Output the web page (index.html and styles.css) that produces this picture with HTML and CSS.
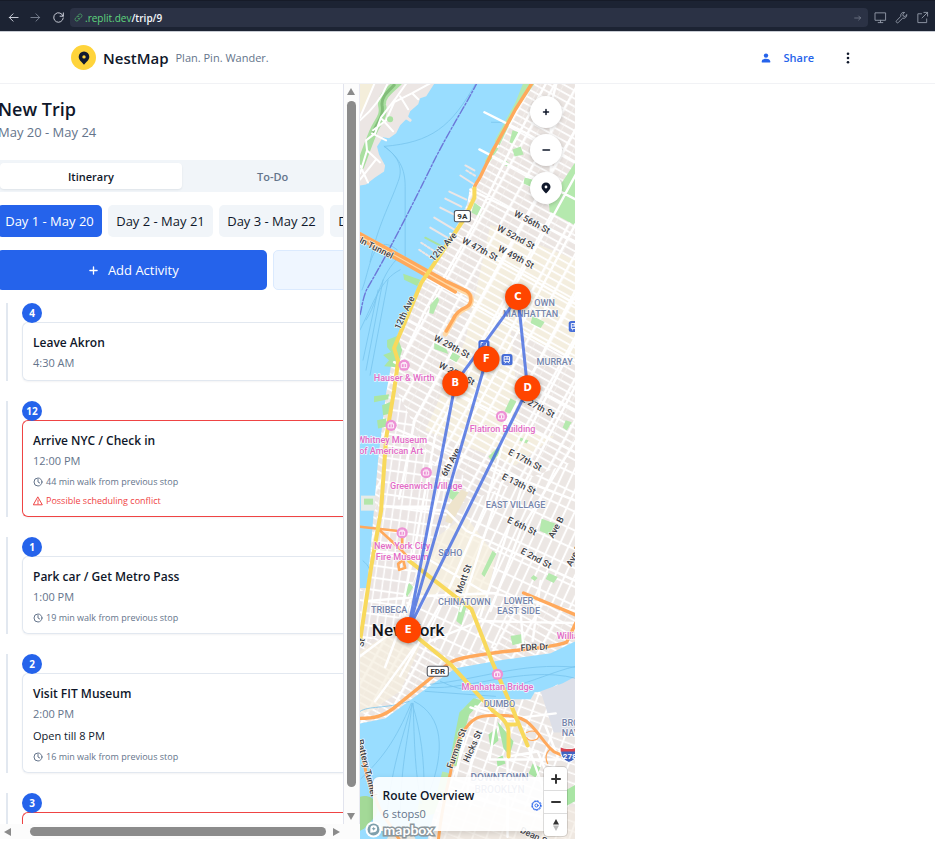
FILE: index.html
```html
<!DOCTYPE html>
<html lang="en">
<head>
<meta charset="utf-8">
<title>NestMap</title>
<link rel="stylesheet" href="styles.css">
</head>
<body>
<div class="browser">
  <button class="nav" aria-label="Back"><svg viewBox="0 0 12 12"><path d="M11 6H1.5M5.500 2L1.500 6l4 4"/></svg></button>
  <button class="nav dim" aria-label="Forward"><svg viewBox="0 0 12 12"><path d="M1 6h9.500M6.500 2l4 4-4 4"/></svg></button>
  <button class="nav" aria-label="Reload"><svg viewBox="0 0 12 12"><path d="M11 4.500A5.200 5.200 0 1 0 11.200 6.500M11.300 1v3.600H7.700"/></svg></button>
  <a class="address" href="#">
    <svg class="chain" viewBox="0 0 12 12"><path d="M5 3.500L6.500 2a2.300 2.300 0 0 1 3.400 3.400L8.300 7a2.300 2.300 0 0 1-3 .2M7 8.500L5.500 10A2.300 2.300 0 0 1 2.100 6.600L3.700 5a2.300 2.300 0 0 1 3-.2"/></svg>
    <span class="host">.replit.dev</span><span class="path">/trip/9</span>
    <svg class="go" viewBox="0 0 12 12"><path d="M1 6h9M7 3l3 3-3 3"/></svg>
  </a>
  <div class="tools">
    <button class="tool" aria-label="Device"><svg viewBox="0 0 14 14"><path d="M1.500 2h11v8h-11zM7 10v2.500M4.500 12.500h5"/></svg></button>
    <button class="tool" aria-label="Tools"><svg viewBox="0 0 14 14"><path d="M12.700 4.200l-2 1.800-1.800-.6-.5-1.800 2-2A3.300 3.300 0 0 0 6.300 5.700L1.700 10.400a1.300 1.300 0 0 0 1.900 1.900L8.300 7.700a3.300 3.300 0 0 0 4.400-3.500z"/></svg></button>
    <button class="tool" aria-label="Open in new tab"><svg viewBox="0 0 14 14"><path d="M6 3H2v9.500h9.500V8.500M8.500 1.500h4v4M12.500 1.500L6.500 7.500"/></svg></button>
  </div>
</div>

<header class="header">
  <div class="brand">
    <span class="logo"><svg viewBox="0 0 12 14"><path fill-rule="evenodd" d="M6 .5a5.300 5.300 0 0 0-5.300 5.300C.7 9 3.800 11 6 13.700 8.200 11 11.300 9 11.300 5.800A5.300 5.300 0 0 0 6 .5zM6 4.200a1.700 1.700 0 1 1 0 3.400 1.700 1.700 0 0 1 0-3.400z"/></svg></span>
    <h1>NestMap</h1>
    <p>Plan. Pin. Wander.</p>
  </div>
  <div class="actions">
    <button class="share"><svg viewBox="0 0 10 10"><circle cx="5" cy="2.600" r="2.200"/><path d="M.8 9.500V8.300C.8 6.600 3 5.800 5 5.800s4.200.8 4.200 2.500v1.200z"/></svg>Share</button>
    <button class="more" aria-label="More"><svg viewBox="0 0 4 12"><circle cx="2" cy="1.700" r="1.300"/><circle cx="2" cy="6" r="1.300"/><circle cx="2" cy="10.300" r="1.300"/></svg></button>
  </div>
</header>

<main class="main">
  <section class="sidebar">
    <div class="pane">
      <div class="content">
        <div class="trip">
          <h2>New Trip</h2>
          <p>May 20 - May 24</p>
        </div>
        <div class="tabs">
          <button class="tab on">Itinerary</button>
          <button class="tab">To-Do</button>
        </div>
        <div class="days">
          <button class="day on">Day 1 - May 20</button>
          <button class="day">Day 2 - May 21</button>
          <button class="day">Day 3 - May 22</button>
          <button class="day">Day 4 - May 23</button>
        </div>
        <div class="add-row">
          <button class="add"><svg viewBox="0 0 10 10"><path d="M5 1v8M1 5h8"/></svg>Add Activity</button>
          <button class="ghost" aria-label="Optimize"></button>
        </div>
        <ol class="list">
          <li><span class="badge">4</span>
            <article class="card"><h3>Leave Akron</h3><p class="time">4:30 AM</p></article></li>
          <li><span class="badge">12</span>
            <article class="card conflict"><h3>Arrive NYC / Check in</h3><p class="time">12:00 PM</p>
              <p class="meta"><svg viewBox="0 0 10 10"><circle cx="5" cy="5" r="4"/><path d="M5 2.500V5l1.700 1"/></svg>44 min walk from previous stop</p>
              <p class="meta warn"><svg viewBox="0 0 10 10"><path d="M5 1.200L9.300 8.800H.7zM5 4v2M5 7v.8"/></svg>Possible scheduling conflict</p></article></li>
          <li><span class="badge">1</span>
            <article class="card"><h3>Park car / Get Metro Pass</h3><p class="time">1:00 PM</p>
              <p class="meta"><svg viewBox="0 0 10 10"><circle cx="5" cy="5" r="4"/><path d="M5 2.500V5l1.700 1"/></svg>19 min walk from previous stop</p></article></li>
          <li><span class="badge">2</span>
            <article class="card"><h3>Visit FIT Museum</h3><p class="time">2:00 PM</p><p class="note">Open till 8 PM</p>
              <p class="meta"><svg viewBox="0 0 10 10"><circle cx="5" cy="5" r="4"/><path d="M5 2.500V5l1.700 1"/></svg>16 min walk from previous stop</p></article></li>
          <li><span class="badge">3</span>
            <article class="card conflict tall"></article></li>
        </ol>
      </div>
    </div>
    <div class="vbar"><i class="arrow up"></i><i class="thumb"></i><i class="arrow down"></i></div>
    <div class="hbar"><i class="arrow left"></i><i class="thumb"></i><i class="arrow right"></i></div>
  </section>

  <section class="map">
    <svg class="tiles" viewBox="360 83 215 756" preserveAspectRatio="xMidYMid slice" role="img" aria-label="Map of Manhattan">
      <defs>
        <pattern id="grid" width="20" height="7" patternUnits="userSpaceOnUse" patternTransform="translate(474 188) rotate(29)">
          <rect width="20" height="7" fill="#fff"/><rect x="1.500" y="1" width="17.500" height="5.200" fill="#ebe5e2"/><path d="M8 1v5" stroke="#f3efec" stroke-width="1"/>
        </pattern>
        <pattern id="cream" width="20" height="7" patternUnits="userSpaceOnUse" patternTransform="translate(474 188) rotate(29)">
          <rect width="20" height="7" fill="#fff"/><rect x="1.500" y="1" width="17.500" height="5.200" fill="#f4eedf"/>
        </pattern>
        <pattern id="lower" width="9" height="17" patternUnits="userSpaceOnUse" patternTransform="translate(470 500) rotate(25)">
          <rect width="9" height="17" fill="#fff"/><rect x="1" y="1" width="7" height="15" fill="#ece7e4"/>
        </pattern>
        <pattern id="west" width="8" height="12" patternUnits="userSpaceOnUse" patternTransform="translate(390 470) rotate(8)">
          <rect width="8" height="12" fill="#fff"/><rect x="1" y="1" width="6.500" height="10" fill="#ebe5e4"/>
        </pattern>
        <pattern id="bk" width="13" height="9" patternUnits="userSpaceOnUse" patternTransform="translate(480 700) rotate(20)">
          <rect width="13" height="9" fill="#fff"/><rect x="1" y="1" width="11" height="7.500" fill="#ebe6e3"/>
        </pattern>
      </defs>
      <rect x="360" y="83" width="215" height="756" fill="#99ddff"/>

      <!-- New Jersey shore -->
      <path d="M360 83h75l-9 14-6 2-2 6-8 7-2 5 2 4-4-1-6 6-4 8-7 5-6-1-6 9 2 8 6 11-1 6-9 6-9 7-6 1z" fill="#ece6e4"/>
      <path d="M360 83h14l-8 24-6 6z" fill="#f4eedb"/>
      <path d="M398 83c-8 8-17 13-16 23 3 12-5 16-9 27-5 12-9 24-13 34" fill="none" stroke="#a9dfa0" stroke-width="8"/>
      <path d="M394 86c-7 7-13 12-12 20 2 11-5 17-9 27" fill="none" stroke="#82bd79" stroke-width="3"/>
      <g fill="none" stroke="#fff" stroke-width="2">
        <path d="M375 83l-15 35M388 83c-6 16-15 27-28 38M407 83l-12 17-14 18-6 16-9 7 1 10-7 23M432 83l-20 11-18 9-8 18-13 10M400 97l8 13M412 94l6 6M382 120l11 12M372 134l14 7M367 151l13 12M360 180l16-20M360 166l8 17"/>
      </g>
      <circle cx="390" cy="120" r="3" fill="#a9e2a0"/><path d="M404 117l6 4" stroke="#ece6e4" stroke-width="3"/>

      <!-- Manhattan -->
      <path d="M524 83l-10 24-24 47-14 28-7 9-2 13-7 15-12 24-12 18-14 17-10 24-15 34-4 15-3 20-4 22-4 33-4 34-3 35-2 25-1 12-5 55h-7v135l25-5 40-29 30-21 45-8 50-7 25-12V83z" fill="url(#grid)"/>
      <path d="M490 225l85 35v160l-60 45-90-35 40-90z" fill="url(#cream)"/>
      <path d="M510 330l65 30v80l-55-10z" fill="url(#grid)"/>
      <path d="M394 385l40 80 30 10-20 60-30 70-20 20-34 20V590h9l6-60 8-65z" fill="url(#west)"/>
      <path d="M455 505l120-45v150l-60-15-20 50-50 10-40-50 10-30z" fill="url(#lower)"/>
      <path d="M425 545l40-30 30 40-10 55-45-20-25 15z" fill="#f7f0df" opacity=".75"/>
      <path d="M360 650l25-15 35 10-20 45-30 20-10 2z" fill="#f5eede" opacity=".7"/>

      <!-- piers -->
      <g stroke="#ece6e6" stroke-width="2">
        <path d="M465 166l9 5M460 176l14 9M449 192l17 8M445 199l16 8M440 208l18 9M434 218l20 12M430 228l17 10"/><path stroke="#a9e2a0" d="M425 238l17 9"/><path stroke-dasharray="2 2" d="M466 171l10 6M421 243l14 9M419 250l12 8"/>
      </g>
      <path d="M403 274l17 6-3 6-13-6zM387 340l10-4 5 14-5 17-13-1 5-6-6-5 8-3-4-5zM374 396l15-2-1 5-14 3zM382 405l10-4v12l-9 2zM377 420l9-2 1 8-9 2z" fill="#aae6a3"/>
      <path d="M361 495h14v15h-14z" fill="#e6ebe8"/><path d="M364 498h9v6h-9z" fill="#b3e6aa"/>

      <!-- parks -->
      <g fill="#b5e9ae">
        <path d="M575 162l-15 23-12 16 1 11 26 14zM523 83h12l-19 27-17 36-5-4 21-39zM493 146l5 3-10 15-4-2zM512 131l6 2-5 12-4-2zM474 203l8 6-3 8-8-4zM512 150l8-3 3 8-9 2zM524 178l11 3-1 8-11-5zM504 160l5 4-3 3-5-4zM430 305l7-8 2 3-6 14-4-1zM434 343l12 6 2 5-14-5zM452 352l8 4-4 6-7-4zM532 316l12 6-4 6-10-5zM510 398l7 4-6 12-7-3zM449 488l16 6-7 9-9-6zM541 518l14 5-5 12-11-5zM492 550l4 3-12 23-3-3zM565 420l6 2-5 8-4-3zM497 447l4 3-9 12-4-6zM548 572l9 4-4 6-8-4zM460 603l6 3-5 18-5-4zM533 574l4 3-3 3-4-3zM520 437l8 3-2 3-7-3zM510 635l12-2 2 8-12 3zM404 590l5-8 4 4-6 10z"/>
      </g>
      <path d="M448 505l13-16 7 3-17 31-6-2z" fill="#eee4cc"/>

      <!-- Brooklyn -->
      <path d="M575 684l-14 3-4-4-12 7-11 1-4 7-45 0-9-1-14 11-2 18-6 20-3 22-8 18-8 21-8 32h148z" fill="url(#bk)"/>
      <path d="M459 711l14-14 9 2-13 14-7 24-6 28-7-3 4-21z" fill="#a9e5a4"/><path d="M442 770l8 2-6 24-8-2zM420 793l22-3-8 22-18 5z" fill="#b5e9ae"/>
      <path d="M540 690l22-8 13-7v56h-22z" fill="#dcdfe8"/>
      <path d="M497 720l16 20-4 14-6-7zM488 733l8-6 2 12-8 7zM496 757l6-3 3 8-8 3zM532 762l8 4-5 10-7-4zM566 788l9-5v16l-9 5z" fill="#a9e5a4"/>
      <path d="M440 805h135v34H432z" fill="#f1eadf" opacity=".6"/>
      <path d="M360 795c12-4 22 8 15 20l-11 12-4 2z" fill="#a3d997"/>
      <path d="M392 827l22 7 2 5h-30z" fill="#eae7de"/>

      <!-- ferry routes -->
      <g fill="none" stroke="#78c4ee" stroke-width=".8">
        <path d="M476 83c-25 45-45 60-92 64 12 8 20 20 14 35-9 25-20 43-28 80M384 147c15 11 21 22 21 40v75M491 123h13M362 290c8-20 10-60 35-40M360 330c14-28 20-50 40-60M366 320c12-18 12-40 30-60M363 360l15-70M366 370l17-90M370 375l18-95M363 560c6 5 8 9 6 16"/>
        <path d="M412 702c-8 30-20 60-25 110M412 702c-4 35-11 60-12 110M413 702c1 40 2 70 8 100M411 702c-16 38-29 55-50 75M412 702c9 30 12 55 12 90M414 700c30 15 30 50 16 88M409 700c-25 8-40 4-49 10M420 685c40 8 100-22 155-8M430 683c50-5 90-22 145-17M440 680c50 25 90-4 135-15M425 690l70 5"/>
      </g>
      <path d="M477 83c-14 27-28 48-44 80-22 45-46 92-66 126-4 8-5 18-7 26" fill="none" stroke="#6c77d8" stroke-width="1.400" stroke-dasharray="8 2 2 2"/>

      <!-- white arterials -->
      <g fill="none" stroke="#fff" stroke-width="2.400">
        <path d="M546 83l-34 63-38 78-50 88-30 64M575 130l-60 105-64 117-36 66-16 80M575 175l-60 110-80 150-20 110-15 70M575 224l-60 112-70 130-30 120-30 80M575 290l-65 125-25 90-35 80-50 90M575 340l-75 145-40 125M575 385l-55 105-40 125M575 440l-55 90-30 80M556 83c-5 20-8 25-5 60l-2 60M484 113l40 20 51 30M479 150l96 50M470 190l105 52M450 234l125 70M425 277l150 84M403 318l172 92M394 362l181 90M387 425l60 25 128 50M381 505l65 5 20 20 109 50M372 550l50 5 60 35 93 20M368 600l58-5 70-3M384 506h50M430 640l50-20 95 2M360 655l40-30M375 700l40-55M520 610l3 40M540 580l-8 60"/>
        <path d="M470 706l35 12 50-6M497 708l-8 50h70M507 755l30-5 25 60M507 755v80M527 743l25 70M465 728l-10 50 90 30M545 725l12 30M475 730l-8 60M450 790l90 25M475 705l20 5"/>
      </g>

      <!-- highways -->
      <g fill="none" stroke="#ffd9a6" stroke-width="5" stroke-linejoin="round"><path d="M360 235l42 23 43 25 22 10c6 4 5 12-1 15-7 3-10 6-13 12l-8 14"/></g>
      <g fill="none" stroke="#ffa95c" stroke-width="3.400" stroke-linejoin="round" stroke-linecap="round">
        <path d="M532 83l-17 27-23 42-12 25c-4 8-6 7-6 13"/>
        <path d="M360 234l42 23 43 24 21 10c6 4 6 13 0 16-7 3-11 7-13 12l-7 12M360 239l40 22 55 31"/>
        <path d="M360 526l36 4M378 528l24 22 8 9M402 533v17M398 563l5-4 2 8-6 2z" stroke-width="2.600"/>
        <path d="M523 592l52 22M575 622l-9 19c-18 8-80 8-111 18-9 3-12 9-21 15l-37 30c-14 12-24 13-37 13"/>
        <path d="M438 839c3-30 8-50 12-67 3-16 5-31 12-40 9-16 18-18 29-18 14 0 23-1 35 6 10 7 17 22 27 30l9 4M360 740l7 36 13 32 20 31" stroke-width="3"/>
        <path d="M526 731c6-3 13-1 12 4s-10 5-12 1M549 748c-5 5-4 10-2 14" stroke-width="1.200"/>
      </g>
      <g fill="none" stroke="#f8d95c" stroke-width="4" stroke-linejoin="round">
        <path d="M474 189v9l-10 21-18 27-25 37-27 65 4 13-4 29-8 48-5 72-10 57-11 73"/>
        <path d="M409 560l36 28 26 20 20 51 20 46 16 39M418 637l32 26 42 46c9 7 16 12 16 22v24M508 723h7" />
      </g>

      <!-- area labels -->
      <g class="area">
        <text x="544" y="306">OWN</text><text x="530" y="317">MANHATTAN</text><text x="536" y="365" class="start">MURRAY HILL</text>
        <text x="515" y="507">EAST VILLAGE</text><text x="450" y="555">SOHO</text><text x="464" y="604">CHINATOWN</text>
        <text x="518" y="603">LOWER</text><text x="518" y="613">EAST SIDE</text><text x="389" y="612">TRIBECA</text>
        <text x="499" y="706">DUMBO</text><text x="561" y="725" class="start">BROOKLYN</text><text x="561" y="735" class="start">NAVY YARD</text>
        <text x="499" y="779" class="wide">DOWNTOWN</text><text x="499" y="791" class="wide">BROOKLYN</text>
      </g>
      <!-- street labels -->
      <g class="street">
        <text transform="translate(530 225) rotate(28)">W 56th St</text><text transform="translate(514 240) rotate(28)">W 52nd St</text>
        <text transform="translate(478 252) rotate(28)">W 47th St</text><text transform="translate(514 260) rotate(28)">W 49th St</text>
        <text transform="translate(450 349) rotate(28)">W 29th St</text><text transform="translate(455 376) rotate(28)">W 25th St</text>
        <text transform="translate(536 409) rotate(28)">E 27th St</text><text transform="translate(523 462) rotate(28)">E 17th St</text>
        <text transform="translate(517 486) rotate(26)">E 13th St</text><text transform="translate(520 528) rotate(26)">E 6th St</text>
        <text transform="translate(534 560) rotate(28)">E 2nd St</text>
        <text transform="translate(445 249) rotate(-48)">12th Ave</text><text transform="translate(407 314) rotate(-65)">12th Ave</text>
        <text transform="translate(453 463) rotate(-62)">6th Ave</text><text transform="translate(466 579) rotate(-70)">Mott St</text>
        <text transform="translate(558 528) rotate(-62)">Ave B</text><text transform="translate(576 556) rotate(-62)">Ave D</text>
        <text transform="translate(534 649) rotate(-3)">FDR Dr</text><text transform="translate(459 748) rotate(-70)">Furman St</text>
        <text transform="translate(475 746) rotate(-66)">Hicks St</text><text transform="translate(364 767) rotate(76)">Battery Tunnel</text>
        <text transform="translate(375 251) rotate(27)">ln Tunnel</text><text transform="translate(533 837) rotate(25)">Dean St</text>
        <text transform="translate(364 642) rotate(-78)">St</text>
      </g>
      <!-- places -->
      <g class="place">
        <text x="404" y="381">Hauser &amp; Wirth</text><text x="392" y="443">Whitney Museum</text><text x="391" y="454">of American Art</text>
        <text x="502" y="432">Flatiron Building</text><text x="426" y="488">Greenwich Village</text><text x="402" y="548">New York City</text><text x="402" y="559">Fire Museum</text>
        <text x="497" y="689">Manhattan Bridge</text><text x="556" y="638" class="start">Williamsburg</text>
      </g>
      <g>
        <g id="poi"><circle cx="404" cy="365" r="5.600" fill="#ed92d5"/><path d="M401.500 363.500h5v4h-5zM402.500 362.500h3M404 364.500v2" fill="none" stroke="#fff" stroke-width=".9"/></g>
        <use href="#poi" x="-13" y="60"/><use href="#poi" x="97" y="51"/><use href="#poi" x="22" y="107"/><use href="#poi" x="-2" y="167"/><use href="#poi" x="93" y="308"/>
      </g>
      <g id="train"><rect x="501" y="354" width="11" height="11" rx="2.500" fill="#476ed8"/><path d="M504 356.500h5v5h-5zM504 359h5M506.500 356.500v2.500M504.500 363l1-1M508.500 363l-1-1" fill="none" stroke="#fff" stroke-width=".9"/></g>
      <use href="#train" x="-23" y="-14"/><use href="#train" x="67" y="-33"/>
      <g class="shield">
        <rect x="454" y="211" width="16" height="11" rx="2"/><text x="462" y="219.500">9A</text>
        <rect x="427" y="665" width="21" height="10" rx="2"/><text x="437.500" y="673">FDR</text>
      </g>
      <path d="M560 746c5 2 11 2 16 0v10c-3 3-5 4-8 5-6-2-9-8-8-15z" fill="#4263c0" stroke="#fff"/><path d="M560 746c5 2 11 2 16 0v4h-16z" fill="#d8424e"/><text x="569" y="757" class="interstate">278</text>
      <text x="408" y="635" class="city">New York</text>

      <!-- route -->
      <path class="route" d="M455 383L517.500 297L527 389L408 629L455 383M486 359L408 629"/>
      <g class="pin"><circle cx="517.500" cy="297" r="13"/><text x="517.500" y="300">C</text></g>
      <g class="pin"><circle cx="455" cy="383" r="13"/><text x="455" y="386">B</text></g>
      <g class="pin"><circle cx="486" cy="359" r="13"/><text x="486" y="362">F</text></g>
      <g class="pin"><circle cx="527" cy="388" r="13"/><text x="527" y="391">D</text></g>
      <g class="pin"><circle cx="408" cy="629" r="13"/><text x="408" y="632">E</text></g>
    </svg>

    <div class="controls">
      <button aria-label="Zoom in"><svg viewBox="0 0 12 12"><path d="M6 3.500v5M3.500 6h5"/></svg></button>
      <button aria-label="Zoom out"><svg viewBox="0 0 12 12"><path d="M3 6h6.500"/></svg></button>
      <button aria-label="Center map"><svg class="solid" viewBox="0 0 12 14"><path fill-rule="evenodd" d="M6 1.500a4.500 4.500 0 0 0-4.500 4.500C1.500 8.500 4 10.300 6 12.500 8 10.300 10.500 8.500 10.500 6A4.500 4.500 0 0 0 6 1.500zM6 4.600a1.400 1.400 0 1 1 0 2.800 1.400 1.400 0 0 1 0-2.800z"/></svg></button>
    </div>

    <div class="overview">
      <div><h2>Route Overview</h2><p>6 stops0</p></div>
      <button class="gear" aria-label="Route settings"><svg viewBox="0 0 12 12"><circle cx="6" cy="6" r="4.400"/><circle cx="6" cy="6" r="1.700"/><circle cx="6" cy="6" r="5.200" stroke-dasharray="1.500 2"/></svg></button>
    </div>
    <div class="zoom">
      <button aria-label="Zoom in"><svg viewBox="0 0 10 10"><path d="M5 1v8M1 5h8"/></svg></button>
      <button aria-label="Zoom out"><svg viewBox="0 0 10 10"><path d="M1 5h8"/></svg></button>
      <button aria-label="Reset north"><svg class="compass" viewBox="0 0 10 14"><path d="M5 1L8 6.500H2z"/><path class="south" d="M5 13L2 7.500h6z"/></svg></button>
    </div>
    <a class="mapbox" href="#"><svg viewBox="0 0 16 16"><circle cx="8" cy="8" r="7.500"/><circle class="ring" cx="8" cy="8" r="5.600"/><path d="M5 11V7.300a3.200 3.200 0 1 1 3.200 3.200zM8.200 5.500l.6 1.200 1.300.6-1.300.6-.6 1.200-.6-1.200-1.300-.6 1.300-.6z" fill-rule="evenodd" class="ink"/></svg><span>mapbox</span></a>
  </section>
</main>
</body>
</html>
```

FILE: styles.css
```css
* { box-sizing: border-box; }
body, h1, h2, h3, p, ol { margin: 0; padding: 0; }
body {
  display: flex;
  flex-direction: column;
  height: 100vh;
  overflow: hidden;
  background: #fff;
  color: #0f172a;
  font-family: "Open Sans", "Noto Sans", sans-serif;
  font-size: 13px;
}
button { font: inherit; color: inherit; border: 0; padding: 0; background: none; }
a { color: inherit; text-decoration: none; }
svg { fill: none; stroke-linecap: round; stroke-linejoin: round; }

/* browser chrome */
.browser {
  display: flex;
  align-items: center;
  height: 32px;
  flex: none;
  padding: 3px 6px 0 7px;
  background: #1c2333;
  border-top: 1px solid #161b28;
  border-bottom: 1px solid #c8ccd4;
  color: #d5d9e2;
}
.nav { display: flex; justify-content: center; width: 23px; }
.nav svg { width: 11px; height: 11px; stroke: currentColor; }
.nav:first-child { width: 12px; margin-right: 5px; }
.dim { color: #7c8394; }
.address {
  display: flex;
  align-items: center;
  flex: 1;
  height: 19px;
  padding: 0 6px 0 4px;
  border-radius: 4px;
  background: #2b3245;
  font-size: 10px;
}
.address svg { width: 9px; height: 9px; }
.chain { stroke: #4fae6b; margin-right: 2px; }
.host { color: #5fd67e; }
.path { color: #f5f9fc; font-weight: 600; }
.address .go { stroke: #858c9c; margin-left: auto; width: 8px; height: 8px; }
.tools { display: flex; gap: 8px; margin-left: 6px; color: #9299a8; }
.tool svg { display: block; width: 13px; height: 13px; stroke: currentColor; }

/* app header */
.header {
  display: flex;
  align-items: center;
  justify-content: space-between;
  height: 52px;
  flex: none;
  padding: 0 85px 0 71px;
  border-bottom: 1px solid #f1f2f5;
}
.brand { display: flex; align-items: center; }
.logo {
  display: flex;
  align-items: center;
  justify-content: center;
  width: 25px;
  height: 25px;
  margin-right: 7px;
  border-radius: 50%;
  background: #ffd43b;
}
.logo svg { width: 12px; height: 14px; fill: #111a30; }
.brand h1 { font-size: 15px; font-weight: 600; line-height: 24px; margin-right: 7px; }
.brand p { font-size: 11px; color: #64748b; }
.actions { display: flex; align-items: center; gap: 32px; }
.share { display: flex; align-items: center; gap: 12px; font-size: 11px; font-weight: 600; color: #2563eb; }
.share svg { width: 10px; height: 10px; fill: #2563eb; }
.more svg { display: block; width: 4px; height: 12px; fill: #0f172a; }

/* columns: planner, map, free space */
.main {
  display: grid;
  grid-template-columns: minmax(0, 5fr) minmax(0, 3fr) minmax(0, 5fr);
  flex: 1;
  min-height: 0;
  margin-bottom: 3px;
}
.sidebar {
  display: grid;
  grid-template-columns: minmax(0, 1fr) 17px;
  grid-template-rows: minmax(0, 1fr) 15px;
  min-height: 0;
}
.pane { overflow: hidden; }
.content { margin-left: -3px; }
.trip { padding: 13px 0 0 1px; height: 76px; }
.trip h2 { font-size: 18px; font-weight: 600; line-height: 24px; margin-bottom: 1px; }
.trip p { font-size: 13px; line-height: 20px; color: #64748b; }
.tabs { display: flex; margin-right: -24px; padding: 3px; height: 32px; background: #f1f5f9; }
.tab { flex: 1; border-radius: 4px; font-size: 11px; font-weight: 600; color: #64748b; }
.tab.on { background: #fff; color: #0f172a; box-shadow: 0 1px 2px #0f172a14; }
.days { display: flex; gap: 6px; margin-top: 13px; overflow: hidden; }
.day { flex: none; width: 105px; height: 32px; border-radius: 5px; background: #f1f5f9; }
.day.on { background: #2563eb; color: #fff; }
.add-row { display: flex; gap: 6px; margin-top: 13px; overflow: hidden; }
.add, .ghost { height: 40px; flex: none; border-radius: 5px; width: 78%; }
.add { display: flex; align-items: center; justify-content: center; gap: 10px; padding-left: 4px; background: #2563eb; color: #fff; }
.add svg { width: 9px; height: 9px; stroke: #fff; stroke-width: 1.5; }
.ghost { background: #eff6ff; border: 1px solid #dbeafe; }

.list { display: flex; flex-direction: column; gap: 20px; margin-top: 13px; padding-left: 9px; list-style: none; }
.list li { border-left: 2px solid #e2e8f0; padding-left: 14px; }
.badge {
  position: relative;
  display: flex;
  align-items: center;
  justify-content: center;
  width: 20px;
  height: 20px;
  margin-bottom: -1px;
  border-radius: 50%;
  background: #2563eb;
  color: #fff;
  font-size: 10px;
  font-weight: 700;
}
.card { padding: 9px 10px 6px; border: 1px solid #e2e8f0; border-right: 0; border-radius: 6px 0 0 6px; box-shadow: 0 1px 2px #0f172a0d; }
.conflict { border-color: #ef4444; }
.tall { height: 90px; }
.card h3 { font-size: 12px; font-weight: 600; line-height: 21px; }
.time { font-size: 11px; line-height: 20px; color: #64748b; margin-bottom: 1px; }
.note { margin: 2px 0; font-size: 11px; line-height: 19px; }
.meta { display: flex; align-items: center; gap: 3px; font-size: 9px; line-height: 19px; color: #64748b; }
.meta svg { width: 10px; height: 10px; stroke: currentColor; }
.warn { color: #ef4444; }

/* scrollbars */
.vbar, .hbar { display: flex; align-items: center; background: #fcfcfc; }
.vbar { flex-direction: column; padding: 4px 0; border-left: 1px solid #e2e4ee; border-right: 1px solid #e9e9f1; }
.vbar .thumb { flex: 1; width: 9px; margin: 6px 0 26px; border-radius: 5px; background: #8b8b8b; }
.hbar { grid-column: 1 / -1; padding: 0 20px 0 4px; }
.hbar .thumb { flex: 1; height: 9px; margin: 0 7px 0 19px; border-radius: 5px; background: #8b8b8b; }
.arrow { border: 4px solid transparent; }
.up { border-top: 0; border-bottom: 7px solid #8b8b8b; }
.down { border-bottom: 0; border-top: 7px solid #8b8b8b; }
.left { border-left: 0; border-right: 7px solid #8b8b8b; }
.right { border-right: 0; border-left: 7px solid #8b8b8b; }

/* map */
.map { position: relative; overflow: hidden; min-height: 0; }
.tiles { display: block; width: 100%; height: 100%; }
.tiles text { font-family: Roboto, sans-serif; text-anchor: middle; paint-order: stroke; stroke: #ffffffcc; stroke-width: 1.5px; }
.tiles .start { text-anchor: start; }
.area text { font-size: 9px; font-weight: 500; fill: #7585ab; }
.street text { font-size: 9px; font-weight: 500; fill: #414247; }
.place text { font-size: 9px; font-weight: 500; fill: #e26bc6; }
.tiles .wide { font-size: 10px; }
.shield rect { fill: #fff; stroke: #4a4d57; }
.tiles .shield text { font-size: 8px; font-weight: 700; fill: #333; stroke: none; }
.tiles .interstate { font-size: 8px; font-weight: 700; fill: #fff; stroke: none; }
.tiles .city { font-size: 17px; font-weight: 500; fill: #16171b; }
.route { fill: none; stroke: #4169e1; stroke-width: 3; stroke-opacity: .8; }
.pin circle { fill: #ff4500; filter: drop-shadow(0 1px 2px #0006); }
.tiles .pin text { font-family: "DejaVu Sans", sans-serif; font-size: 10px; font-weight: 700; fill: #fff; stroke: none; }

.controls { position: absolute; top: 12px; right: 13px; display: flex; flex-direction: column; gap: 6px; }
.controls button { display: flex; align-items: center; justify-content: center; width: 32px; height: 32px; border-radius: 50%; background: #fff; box-shadow: 0 1px 4px #0003; }
.controls svg { width: 12px; height: 12px; stroke: #0f172a; stroke-width: 1.5; }
.controls .solid { height: 14px; fill: #0f172a; stroke: none; }
.overview {
  position: absolute;
  left: 13px;
  right: 13px;
  bottom: 8px;
  display: flex;
  align-items: center;
  justify-content: space-between;
  height: 54px;
  padding: 2px 20px 0 10px;
  border-radius: 6px;
  background: #ffffffe6;
  box-shadow: 0 2px 6px #0002;
}
.overview h2 { font-size: 12px; font-weight: 600; line-height: 18px; }
.overview p { font-size: 11px; line-height: 18px; color: #64748b; }
.gear svg { display: block; width: 11px; height: 11px; stroke: #2563eb; }
.zoom { position: absolute; right: 8px; bottom: 3px; width: 23px; border-radius: 4px; background: #fff; box-shadow: 0 0 0 1px #0002; }
.zoom button { display: flex; align-items: center; justify-content: center; width: 100%; height: 23px; }
.zoom button + button { border-top: 1px solid #ddd; }
.zoom svg { width: 10px; height: 10px; stroke: #333; stroke-width: 2; }
.zoom .compass { height: 14px; fill: #333; stroke: none; }
.compass .south { fill: #bbb; }
.mapbox { position: absolute; left: 5px; bottom: 1px; display: flex; align-items: center; gap: 2px; }
.mapbox svg { width: 17px; height: 17px; fill: #fff; }
.mapbox .ring, .mapbox .ink { fill: #7e9fac; }
.mapbox .ink { fill: #fff; }
.mapbox span { font-family: Lato, sans-serif; font-size: 14px; font-weight: 700; line-height: 17px; color: #fff; -webkit-text-stroke: 3px #8c979c; paint-order: stroke; }
```
